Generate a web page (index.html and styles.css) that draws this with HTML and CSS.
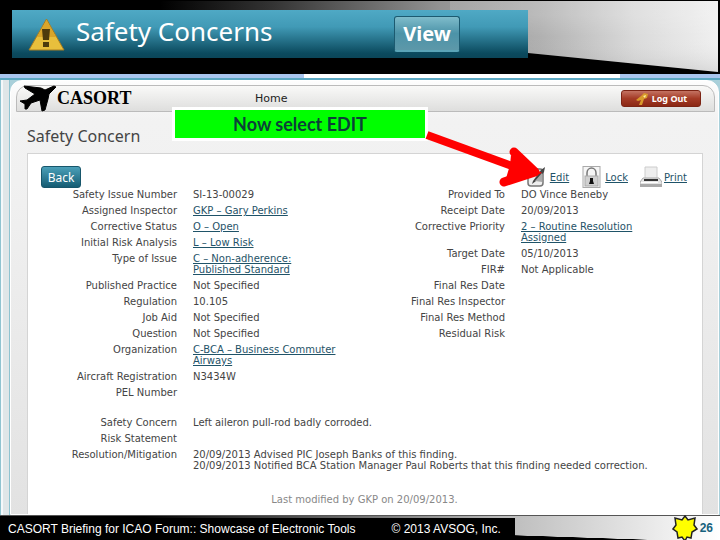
FILE: index.html
```html
<!DOCTYPE html>
<html lang="en">

<head>
    <meta charset="UTF-8">
    <meta name="viewport" content="width=device-width, initial-scale=1.0">
    <title>CASORT - Safety Concern</title>
    <link rel="stylesheet" href="styles.css">
</head>

<body>
    <header class="slide-top">
        <svg class="wedge" viewBox="0 0 720 74" preserveAspectRatio="none" aria-hidden="true">
            <defs>
                <linearGradient id="shine" x1="0" x2="1" y1="0" y2="0">
                    <stop offset="0" stop-color="#000" />
                    <stop offset="0.2" stop-color="#333" />
                    <stop offset="0.5" stop-color="#929292" />
                    <stop offset="0.68" stop-color="#b0b0b0" />
                    <stop offset="0.85" stop-color="#dadada" />
                    <stop offset="1" stop-color="#f0f0f0" />
                </linearGradient>
                <linearGradient id="shade" x1="0" x2="0" y1="0" y2="1">
                    <stop offset="0.2" stop-color="#fff" stop-opacity="0.25" />
                    <stop offset="0.5" stop-color="#fff" stop-opacity="0" />
                    <stop offset="1" stop-color="#000" stop-opacity="0.15" />
                </linearGradient>
            </defs>
            <path d="M160 1H718V72L528 53 160 10z" fill="url(#shine)" />
            <path d="M450 1H718V72L528 53 450 10z" fill="url(#shade)" opacity="0.6" />
        </svg>
        <div class="banner">
            <svg class="warning" viewBox="0 0 38 34" aria-hidden="true">
                <path d="M18.500 2L36 33H1z" fill="#e8bf3c" stroke="#a87c20" stroke-width="1" />
                <path d="M18.500 3L28 20H9z" fill="#cf951e" opacity="0.6" />
                <path d="M14 12h8l-1 11h-6zM15 25h6v5h-6z" fill="#4d3b0c" />
            </svg>
            <h1>Safety Concerns</h1>
            <button class="view-button" type="button">View</button>
        </div>
    </header>

    <main class="browser">
        <div class="window-edge"></div>
        <div class="page">
            <nav class="nav">
                <div class="brand">
                    <svg class="plane" viewBox="0 0 40 28" aria-hidden="true">
                        <path d="M7 1L24 3 28 5 37 1 39 2 32 9 31 14 28 25 25 26 23 15 14 18 10 24 8 24 8 19 3 16 10 15 18 9 8 3z" fill="#000" stroke="#000" stroke-linejoin="round" />
                    </svg>
                    <span>CASORT</span>
                </div>
                <a class="home" href="#">Home</a>
                <button class="logout" type="button">
                    <svg viewBox="0 0 14 14" aria-hidden="true">
                        <path d="M1 8l5-4 3-3 4 1-1 4-3 1-2 6H4l2-5-3 1z" fill="#d99a2b" />
                        <path d="M8 4l3-1-1 3z" fill="#fff0a0" />
                    </svg>
                    Log Out
                </button>
            </nav>

            <h2>Safety Concern</h2>

            <section class="panel">
                <div class="toolbar">
                    <button class="back" type="button">Back</button>
                    <div class="actions">
                        <a href="#">
                            <svg viewBox="0 0 22 22" aria-hidden="true">
                                <rect x="2" y="3" width="15" height="17" rx="3" fill="#eee" stroke="#777" stroke-width="1.500" />
                                <path d="M7 15l8-11 4-3-1 5-8 9-4 3z" fill="#444" />
                                <path d="M9 15l7-8v9z" fill="#aaa" />
                            </svg>
                            <span>Edit</span>
                        </a>
                        <a href="#">
                            <svg viewBox="0 0 22 22" aria-hidden="true">
                                <rect x="2" y="0.500" width="17" height="21" fill="#f6f6f6" stroke="#aaa" />
                                <path d="M6 11V7a4.500 5 0 0 1 9 0v4" fill="none" stroke="#777" stroke-width="1.500" />
                                <rect x="4" y="10" width="13" height="10" fill="#d0d0d0" stroke="#aaa" />
                                <path d="M9 12h3v3l1 3H8l1-3z" fill="#111" />
                            </svg>
                            <span>Lock</span>
                        </a>
                        <a href="#">
                            <svg viewBox="0 0 22 22" aria-hidden="true">
                                <path d="M5 1h12v12H5z" fill="#eee" stroke="#ccc" />
                                <path d="M3 12h16l3 4v4H0v-4z" fill="#e4e4e4" stroke="#aaa" />
                                <path d="M4 13h14v2H4z" fill="#333" />
                                <path d="M0 18h22v3H0z" fill="#aaa" />
                                <path d="M1 16h17v1H1z" fill="#fff" />
                            </svg>
                            <span>Print</span>
                        </a>
                    </div>
                </div>

                <div class="details">
                    <table>
                        <tr><th scope="row">Safety Issue Number</th><td>SI-13-00029</td></tr>
                        <tr><th scope="row">Assigned Inspector</th><td><a href="#">GKP – Gary Perkins</a></td></tr>
                        <tr><th scope="row">Corrective Status</th><td><a href="#">O – Open</a></td></tr>
                        <tr><th scope="row">Initial Risk Analysis</th><td><a href="#">L – Low Risk</a></td></tr>
                        <tr><th scope="row">Type of Issue</th><td><a href="#">C – Non-adherence:<br>Published Standard</a></td></tr>
                        <tr><th scope="row">Published Practice</th><td>Not Specified</td></tr>
                        <tr><th scope="row">Regulation</th><td>10.105</td></tr>
                        <tr><th scope="row">Job Aid</th><td>Not Specified</td></tr>
                        <tr><th scope="row">Question</th><td>Not Specified</td></tr>
                        <tr><th scope="row">Organization</th><td><a href="#">C-BCA – Business Commuter<br>Airways</a></td></tr>
                        <tr><th scope="row">Aircraft Registration</th><td>N3434W</td></tr>
                        <tr><th scope="row">PEL Number</th><td></td></tr>
                    </table>
                    <table>
                        <tr><th scope="row">Provided To</th><td>DO Vince Beneby</td></tr>
                        <tr><th scope="row">Receipt Date</th><td>20/09/2013</td></tr>
                        <tr><th scope="row">Corrective Priority</th><td><a href="#">2 – Routine Resolution<br>Assigned</a></td></tr>
                        <tr><th scope="row">Target Date</th><td>05/10/2013</td></tr>
                        <tr><th scope="row">FIR#</th><td>Not Applicable</td></tr>
                        <tr><th scope="row">Final Res Date</th><td></td></tr>
                        <tr><th scope="row">Final Res Inspector</th><td></td></tr>
                        <tr><th scope="row">Final Res Method</th><td></td></tr>
                        <tr><th scope="row">Residual Risk</th><td></td></tr>
                    </table>
                </div>

                <table class="notes">
                    <tr><th scope="row">Safety Concern</th><td>Left aileron pull-rod badly corroded.</td></tr>
                    <tr><th scope="row">Risk Statement</th><td></td></tr>
                    <tr><th scope="row">Resolution/Mitigation</th><td>20/09/2013 Advised PIC Joseph Banks of this finding.<br>20/09/2013 Notified BCA Station Manager Paul Roberts that this finding needed correction.</td></tr>
                </table>

                <p class="modified">Last modified by GKP on 20/09/2013.</p>
            </section>
        </div>

        <div class="callout">Now select EDIT</div>
        <svg class="arrow" viewBox="0 0 120 60" aria-hidden="true">
            <path d="M3 6L96 40" fill="none" stroke="#f00" stroke-width="8" />
            <path d="M90 23L111 43 80 53" fill="none" stroke="#f00" stroke-width="9" stroke-linecap="round" stroke-linejoin="round" />
            <path d="M87 26L118 44 80 56 86 36z" fill="#f00" />
        </svg>
    </main>

    <footer class="slide-bottom">
        <div class="footer-text">
            <span>CASORT Briefing for ICAO Forum:: Showcase of Electronic Tools</span>
            <span>© 2013 AVSOG, Inc.</span>
        </div>
        <div class="page-number">
            <svg viewBox="0 0 26 26" aria-hidden="true">
                <path d="M13 1l3 4 7-2-1 7 3 4-5 3-1 6-4-1-2 4-3-4-4 1-1-6-4-3 3-4-1-7 7 2z" fill="#ff0" stroke="#222" stroke-width="1.500" />
            </svg>
            <span>26</span>
        </div>
    </footer>
</body>

</html>
```

FILE: styles.css
```css
* {
    box-sizing: border-box;
}

body {
    margin: 0;
    min-height: 100vh;
    display: flex;
    flex-direction: column;
    background-color: #000;
    color: #444;
    font-family: "DejaVu Sans", Verdana, sans-serif;
    font-size: 10px;
    line-height: 11px;
}

button {
    font-family: inherit;
    cursor: pointer;
}

a {
    color: #1f5368;
}

/* top of the slide */
.slide-top {
    position: relative;
    padding: 10px 12px 16px;
    background-color: #000;
}

.wedge {
    position: absolute;
    top: 0;
    left: 0;
    width: 100%;
    height: 100%;
}

.banner {
    position: relative;
    display: flex;
    align-items: center;
    width: 74%;
    min-width: 516px;
    height: 48px;
    padding: 0 68px 0 16px;
    background: linear-gradient(#4fa9c5, #419ab6 35%, #0b4a5e 90%, #0b4558);
}

.warning {
    width: 38px;
    height: 34px;
    margin-right: 10px;
}

.banner h1 {
    margin: 0 0 6px;
    color: #fff;
    font-family: "Noto Sans", sans-serif;
    font-size: 26px;
    font-weight: normal;
    line-height: 40px;
}

.view-button {
    width: 66px;
    height: 36px;
    margin-left: auto;
    padding: 0;
    border: 1px solid #1c5a70;
    border-bottom: 2px solid #5ba5b8;
    border-radius: 3px;
    background: linear-gradient(#7fbccb, #4c93a8 50%, #5d98a9);
    color: #fff;
    font-family: "Noto Sans", sans-serif;
    font-size: 20px;
    font-weight: bold;
    line-height: 30px;
}

/* application window */
.browser {
    position: relative;
    flex: 1;
    padding: 6px 1px 0 10px;
    background: linear-gradient(90deg, #8fc3d0 1px, #f4f8fa 1px 3px, #dfe6e8 3px 9px, #8fc3d0 9px 10px, #a9d0da 10px);
}

.window-edge {
    position: absolute;
    top: 0;
    left: 0;
    width: 100%;
    height: 6px;
    border-bottom: 2px solid #5ba7c1;
    background: linear-gradient(90deg, #a9c5ee 304px, #fff 304px 620px, #a9c5ee 620px);
}

.page {
    height: 100%;
    padding: 4px 3px 0 5px;
    border: 1px solid #fff;
    border-radius: 12px 12px 0 0;
    background: linear-gradient(#fdfdfd, #f2f2f2 40px, #f1f1f1 100px, #e2e2e2);
}

.nav {
    display: flex;
    align-items: center;
    height: 27px;
    padding-right: 13px;
    border: 1px solid #bbb;
    border-radius: 12px 12px 0 0;
    background: linear-gradient(#f9f9f8, #dededd);
}

.brand {
    display: flex;
    align-items: center;
    width: 238px;
    color: #000;
    font-family: "Liberation Serif", serif;
    font-size: 18px;
    font-weight: bold;
}

.plane {
    width: 40px;
    height: 28px;
}

.home {
    color: #222;
    font-size: 11px;
    text-decoration: none;
}

.logout {
    display: flex;
    align-items: center;
    justify-content: center;
    gap: 3px;
    width: 80px;
    height: 17px;
    margin-left: auto;
    padding: 0;
    border: 1px solid #7c2414;
    border-radius: 3px;
    background: linear-gradient(#c47362, #a43b26 50%, #8b2814);
    color: #fff;
    font-family: "Noto Sans", sans-serif;
    font-size: 9px;
    font-weight: bold;
}

.logout svg {
    width: 14px;
    height: 14px;
}

h2 {
    margin: 12px 0 5px 11px;
    color: #444;
    font-family: "Noto Sans", sans-serif;
    font-size: 16px;
    font-weight: normal;
    line-height: 24px;
}

.panel {
    margin: 0 12px 0 11px;
    padding: 12px 15px 9px 0;
    border: 1px solid #d4d4d4;
    border-bottom: none;
    background-color: #fff;
}

.toolbar {
    display: flex;
    justify-content: space-between;
    height: 22px;
    padding-left: 13px;
}

.back {
    width: 40px;
    height: 22px;
    padding: 0;
    border: 1px solid #17566b;
    border-radius: 3px;
    background: linear-gradient(#4ba0b9, #155c73);
    color: #fff;
    font-family: "Noto Sans", sans-serif;
    font-size: 12px;
}

.actions {
    display: flex;
    gap: 12px;
}

.actions a {
    display: flex;
    align-items: center;
    gap: 2px;
}

.actions svg {
    width: 22px;
    height: 22px;
}

.details {
    display: grid;
    grid-template-columns: 328px 1fr;
    align-items: start;
}

table {
    width: 100%;
    border-collapse: collapse;
    table-layout: fixed;
}

th,
td {
    height: 16px;
    padding: 1px 0 4px;
    vertical-align: top;
    font-weight: normal;
    white-space: nowrap;
}

th {
    width: 149px;
    text-align: right;
}

td {
    padding-left: 16px;
    text-align: left;
}

.notes {
    margin-top: 14px;
}

.modified {
    margin: 19px 0 0;
    padding-left: 14px;
    color: #888;
    text-align: center;
}

/* callout over the page */
.callout {
    position: absolute;
    top: 33px;
    left: 172px;
    width: 256px;
    border: 3px solid #fff;
    background-color: #0f0;
    color: #0c3f38;
    font-family: Lato, sans-serif;
    font-size: 18px;
    font-weight: bold;
    line-height: 28px;
    text-align: center;
}

.arrow {
    position: absolute;
    top: 55px;
    left: 424px;
    width: 120px;
    height: 60px;
}

/* bottom of the slide */
.slide-bottom {
    display: flex;
    justify-content: space-between;
    height: 25px;
    border-top: 1px solid #555;
    background: linear-gradient(to top right, #000 45%, transparent 46%), linear-gradient(90deg, #000 20%, #bbb 70%, #fff);
}

.footer-text {
    display: flex;
    gap: 36px;
    margin-top: 2px;
    padding: 0 14px 0 8px;
    background-color: #000;
    color: #fff;
    font-family: "Liberation Sans", Arial, sans-serif;
    font-size: 12px;
    line-height: 22px;
}

.page-number {
    display: flex;
    align-items: center;
    gap: 2px;
    padding-right: 7px;
    color: #17617d;
    font-family: "Liberation Sans", Arial, sans-serif;
    font-size: 12px;
    font-weight: bold;
}

.page-number svg {
    width: 26px;
    height: 26px;
}
```
